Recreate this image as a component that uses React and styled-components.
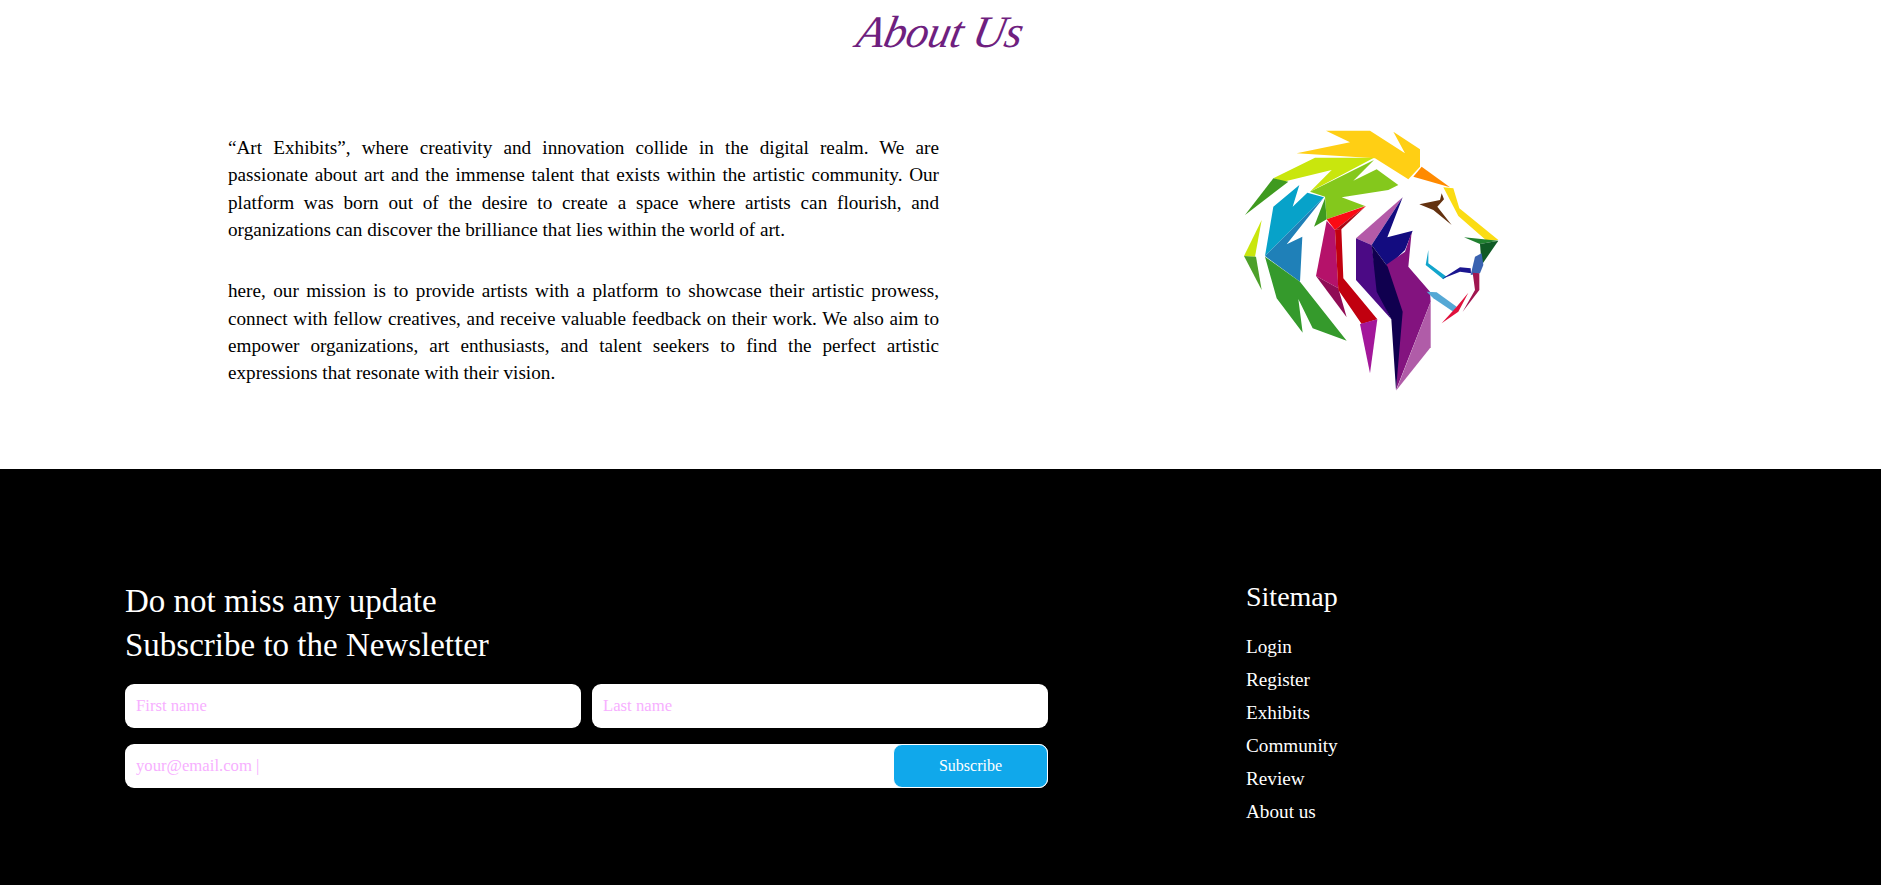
import React from "react";
import styled, { createGlobalStyle } from "styled-components";

const GlobalStyle = createGlobalStyle`
  html, body {
    margin: 0;
    padding: 0;
    background: #fff;
    font-family: "Liberation Serif", "Times New Roman", serif;
  }
`;

const AboutSection = styled.section`
  height: 469px;
  background: #fff;
  overflow: hidden;
`;

const Title = styled.h1`
  margin: 0;
  height: 110px;
  padding-top: 6px;
  box-sizing: border-box;
  text-align: center;
  font-family: "Liberation Serif", serif;
  font-style: italic;
  font-weight: 400;
  font-size: 45px;
  line-height: 52px;
  color: #6f1f7f;

  span {
    display: inline-block;
    transform: skewX(-12deg);
    letter-spacing: -0.5px;
  }
`;

const AboutRow = styled.div`
  display: flex;
  padding-left: 228px;
`;

const AboutText = styled.div`
  width: 711px;
  padding-top: 24px;
`;

const Paragraph = styled.p`
  margin: 0 0 33.6px;
  font-size: 19.2px;
  line-height: 27.4px;
  text-align: justify;
  color: #000;
`;

const LionWrap = styled.div`
  margin-left: 281px;
`;

const Lion = styled.svg`
  display: block;
  width: 300px;
  height: 300px;
`;

const Footer = styled.footer`
  height: 416px;
  background: #000;
  display: flex;
  padding: 110px 0 0 125px;
  box-sizing: border-box;
  color: #fff;
`;

const Newsletter = styled.div`
  width: 923px;
`;

const NewsHeading = styled.h2`
  margin: 0 0 16px;
  font-size: 33px;
  font-weight: 400;
  line-height: 44.4px;
`;

const FieldRow = styled.div`
  display: flex;
  gap: 11px;
  margin-bottom: 16px;
`;

const Field = styled.input`
  flex: 1;
  min-width: 0;
  height: 44px;
  box-sizing: border-box;
  border: none;
  border-radius: 9px;
  padding: 0 10px 0 11px;
  background: #fff;
  font-family: "Liberation Serif", serif;
  font-size: 16.7px;
  outline: none;

  &::placeholder {
    color: #f7b0ff;
    opacity: 1;
  }
`;

const EmailBox = styled.div`
  display: flex;
  height: 44px;
  border-radius: 9px;
  background: #fff;
`;

const EmailField = styled(Field)`
  background: transparent;
`;

const SubscribeButton = styled.button`
  width: 155px;
  height: 44px;
  box-sizing: border-box;
  border: 1px solid #fff;
  border-radius: 9px;
  background: #10a8eb;
  color: #fff;
  font-family: "Liberation Serif", serif;
  font-size: 16px;
`;

const Sitemap = styled.nav`
  margin-left: 198px;
`;

const SitemapTitle = styled.h3`
  margin: 0 0 15px;
  font-size: 28px;
  font-weight: 400;
  line-height: 36px;
`;

const SitemapLink = styled.a`
  display: block;
  font-size: 19.2px;
  line-height: 33px;
  color: #fff;
  text-decoration: none;
`;

const lionShapes = [
  ["#ffcf14", "318,62 450,62 555,130 520,65 600,118 600,170 565,208 465,145 230,130 390,97"],
  ["#c9e60d", "285,143 462,143 270,245 335,180 190,215 160,205"],
  ["#3f9a1f", "160,205 205,215 75,315"],
  ["#84c81c", "462,150 400,212 470,178 535,225 505,240 365,262 435,288 320,328 315,260 270,245"],
  ["#3f9a1f", "315,265 320,328 282,350"],
  ["#07a2c9", "238,225 218,290 262,248 312,262 135,438 160,290"],
  ["#1f80b8", "312,262 200,403 247,380 240,515 135,438"],
  ["#359a2c", "135,440 240,515 380,692 278,655 235,567 248,668 170,565"],
  ["#c9e60d", "125,330 105,440 72,438"],
  ["#4da02a", "72,438 108,440 125,540"],
  ["#b5126a", "320,332 345,360 355,535 288,498"],
  ["#900c55", "288,498 355,535 380,622"],
  ["#fb0a14", "320,328 438,288 345,360"],
  ["#a80a16", "438,288 345,360 364,358"],
  ["#c1000f", "345,360 364,356 370,505 472,628 425,642 355,540"],
  ["#a3179a", "420,642 472,628 450,790"],
  ["#b45aa8", "548,262 455,405 408,385"],
  ["#4b0a85", "408,385 455,405 475,545 514,628 408,510"],
  ["#130c80", "548,262 502,382 578,362 555,420 503,470 455,405"],
  ["#83137f", "575,365 565,470 630,545 632,575 528,840 540,605 498,465 555,425"],
  ["#10004f", "455,405 503,470 548,605 528,840 514,628 470,545"],
  ["#b05ca8", "632,575 632,712 528,842"],
  ["#ff8a00", "605,170 690,232 580,200"],
  ["#fbdc14", "670,232 700,235 718,295 835,390 800,392 715,318"],
  ["#208030", "732,382 835,392 780,402"],
  ["#0f5a25", "835,392 785,465 780,402"],
  ["#3a62b0", "765,440 785,430 790,465 780,490 752,495"],
  ["#643210", "598,283 660,270 665,250 672,268 652,290 695,345 640,300"],
  ["#55a8d5", "620,545 650,547 710,590 700,605 640,565"],
  ["#12a5cc", "625,420 625,460 680,500 670,508 617,465"],
  ["#1b1690", "665,507 720,472 752,475 753,490 720,485"],
  ["#a01650", "758,488 778,490 778,540 728,605 765,540"],
  ["#e0103c", "745,548 715,605 665,640 710,590"],
];

const sitemapLinks = ["Login", "Register", "Exhibits", "Community", "Review", "About us"];

function App() {
  return (
    <>
      <GlobalStyle />
      <AboutSection>
        <Title>
          <span>About Us</span>
        </Title>
        <AboutRow>
          <AboutText>
            <Paragraph>
              “Art Exhibits”, where creativity and innovation collide in the digital realm. We are
              passionate about art and the immense talent that exists within the artistic community.
              Our platform was born out of the desire to create a space where artists can flourish,
              and organizations can discover the brilliance that lies within the world of art.
            </Paragraph>
            <Paragraph>
              here, our mission is to provide artists with a platform to showcase their artistic
              prowess, connect with fellow creatives, and receive valuable feedback on their work. We
              also aim to empower organizations, art enthusiasts, and talent seekers to find the
              perfect artistic expressions that resonate with their vision.
            </Paragraph>
          </AboutText>
          <LionWrap>
            <Lion viewBox="0 0 900 900" aria-label="Art Exhibits lion logo">
              {lionShapes.map(([fill, points]) => (
                <polygon key={points} fill={fill} points={points} />
              ))}
            </Lion>
          </LionWrap>
        </AboutRow>
      </AboutSection>
      <Footer>
        <Newsletter>
          <NewsHeading>
            Do not miss any update
            <br />
            Subscribe to the Newsletter
          </NewsHeading>
          <FieldRow>
            <Field placeholder="First name" />
            <Field placeholder="Last name" />
          </FieldRow>
          <EmailBox>
            <EmailField placeholder="your@email.com |" />
            <SubscribeButton>Subscribe</SubscribeButton>
          </EmailBox>
        </Newsletter>
        <Sitemap>
          <SitemapTitle>Sitemap</SitemapTitle>
          {sitemapLinks.map((link) => (
            <SitemapLink href="#" key={link}>
              {link}
            </SitemapLink>
          ))}
        </Sitemap>
      </Footer>
    </>
  );
}

export default App;
